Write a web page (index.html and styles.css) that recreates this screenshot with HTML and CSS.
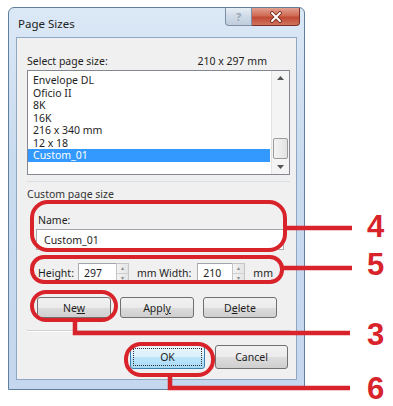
FILE: index.html
```html
<!DOCTYPE html>
<html lang="en">
<head>
    <meta charset="UTF-8">
    <title>Page Sizes</title>
    <link rel="stylesheet" href="styles.css">
</head>
<body>
    <div class="window">
        <div class="titlebar">
            <span class="title">Page Sizes</span>
            <div class="caption-buttons">
                <span class="cap-btn help">?</span>
                <span class="cap-btn close">
                    <svg width="14" height="12" viewBox="0 0 14 12">
                        <path d="M3 2 L11 10 M11 2 L3 10" stroke="#6b2418" stroke-width="3.6" stroke-linecap="round"/>
                        <path d="M3 2 L11 10 M11 2 L3 10" stroke="#fff" stroke-width="2" stroke-linecap="round"/>
                    </svg>
                </span>
            </div>
        </div>

        <div class="client">
            <div class="list-head">
                <span>Select page size:</span>
                <span>210 x 297 mm</span>
            </div>
            <div class="listbox">
                <ul class="items">
                    <li>Envelope DL</li>
                    <li>Oficio II</li>
                    <li>8K</li>
                    <li>16K</li>
                    <li>216 x 340 mm</li>
                    <li>12 x 18</li>
                    <li class="selected">Custom_01</li>
                </ul>
                <div class="scrollbar">
                    <span class="arrow"><svg width="7" height="4" viewBox="0 0 7 4"><path d="M0 4 L3.5 0 L7 4 Z" fill="#555"/></svg></span>
                    <span class="track"></span>
                    <span class="thumb"></span>
                    <span class="arrow"><svg width="7" height="4" viewBox="0 0 7 4"><path d="M0 0 L3.5 4 L7 0 Z" fill="#555"/></svg></span>
                </div>
            </div>

            <div class="group-line"></div>
            <div class="group-title">Custom page size</div>

            <div class="name-label">Name:</div>
            <div class="textbox name-box">Custom_01</div>

            <div class="size-row">
                <span class="size-label">Height:</span>
                <span class="textbox num-box height-box">297</span>
                <span class="spin"><i>&#9652;</i><i>&#9662;</i></span>
                <span class="size-label mm-width">mm Width:</span>
                <span class="textbox num-box width-box">210</span>
                <span class="spin"><i>&#9652;</i><i>&#9662;</i></span>
                <span class="size-label mm">mm</span>
            </div>

            <div class="btn-row">
                <button class="btn">Ne<u>w</u></button>
                <button class="btn">Appl<u>y</u></button>
                <button class="btn">D<u>e</u>lete</button>
            </div>

            <div class="separator"></div>

            <div class="dialog-buttons">
                <button class="btn default"><span class="focus">OK</span></button>
                <button class="btn cancel">Cancel</button>
            </div>
        </div>
    </div>

    <svg class="callouts" width="393" height="406" viewBox="0 0 393 406">
        <g fill="none" stroke="#d8232a" stroke-width="4">
            <rect x="32" y="202" width="253" height="48" rx="16"/>
            <rect x="32" y="257" width="250" height="25" rx="12"/>
            <rect x="32" y="292" width="84" height="28" rx="14"/>
            <rect x="126" y="344" width="87" height="31" rx="15"/>
        </g>
        <g fill="none" stroke="#d8232a" stroke-width="4.5">
            <path d="M285 228 H352"/>
            <path d="M282 268 H352"/>
            <path d="M75 320 V333 H350"/>
            <path d="M170 375 V388 H350"/>
        </g>
    </svg>
    <span class="num n4">4</span>
    <span class="num n5">5</span>
    <span class="num n3">3</span>
    <span class="num n6">6</span>
</body>
</html>
```

FILE: styles.css
```css
body {
    margin: 0;
    width: 393px;
    height: 406px;
    background-color: #fff;
    font-family: "Noto Sans", "Open Sans", sans-serif;
    font-size: 10.5px;
    color: #1e1e1e;
    position: relative;
    overflow: hidden;
}

.window {
    margin: 7px 0 0 8px;
    width: 297px;
    height: 383px;
    box-sizing: border-box;
    border: 1px solid #5f7f9f;
    border-radius: 6px 6px 0 0;
    background: linear-gradient(180deg, #dbe8f6 0%, #c9dbef 40%, #c4d7ee 100%);
    padding: 0 7px 9px 7px;
}

.titlebar {
    height: 29px;
    display: flex;
    justify-content: space-between;
    align-items: flex-start;
}

.title {
    padding: 8px 0 0 2px;
    font-size: 11.5px;
    color: #222;
}

.caption-buttons {
    display: flex;
    margin-right: -3px;
}

.cap-btn {
    height: 18px;
    display: flex;
    align-items: center;
    justify-content: center;
    box-sizing: border-box;
    border: 1px solid #7d8fa5;
    border-top: none;
}

.help {
    width: 27px;
    border-radius: 0 0 0 4px;
    background: linear-gradient(180deg, #e6edf5 0%, #cfdae7 50%, #bfcddd 100%);
    color: #9aa8b8;
    font-weight: bold;
    font-size: 11px;
}

.close {
    width: 48px;
    border-left: none;
    border-color: #7a3026;
    border-radius: 0 0 4px 0;
    background: linear-gradient(180deg, #e3a090 0%, #d06a55 45%, #c24a34 55%, #cf735e 100%);
}

.client {
    height: 343px;
    box-sizing: border-box;
    border: 1px solid #8fa7c2;
    background-color: #f0f0f0;
    padding: 16px 6px 0 10px;
}

.list-head {
    display: flex;
    justify-content: space-between;
    height: 14px;
    line-height: 14px;
    padding-right: 23px;
}

.listbox {
    margin-top: 2px;
    height: 105px;
    box-sizing: border-box;
    border: 1px solid #828790;
    background-color: #fff;
    display: flex;
}

.items {
    flex: 1;
    margin: 0;
    padding: 3px 1px 0 0;
    list-style: none;
}

.items li {
    line-height: 12.5px;
    height: 12.5px;
    padding-left: 5px;
}

.items li.selected {
    background-color: #3399ff;
    color: #fff;
}

.scrollbar {
    width: 17px;
    border-left: 1px solid #e3e3e3;
    background-color: #f4f4f4;
    display: flex;
    flex-direction: column;
    align-items: center;
}

.scrollbar .arrow {
    height: 14px;
    display: flex;
    align-items: center;
}

.scrollbar .track {
    flex: 1;
}

.scrollbar .thumb {
    width: 15px;
    height: 21px;
    box-sizing: border-box;
    border: 1px solid #9b9b9b;
    border-radius: 2px;
    background: linear-gradient(90deg, #f4f4f4, #e2e2e2);
    margin-bottom: 1px;
}

.group-line {
    margin-top: 6px;
    border-top: 1px solid #d5dfe5;
}

.group-title {
    margin-top: 5px;
    height: 14px;
    line-height: 14px;
    color: #333;
}

.name-label {
    margin: 12px 0 0 11px;
    height: 14px;
    line-height: 14px;
}

.textbox {
    box-sizing: border-box;
    border: 1px solid #abadb3;
    border-top-color: #a0a4ab;
    background-color: #fff;
    display: flex;
    align-items: center;
}

.name-box {
    margin: 2px 0 0 9px;
    width: 248px;
    height: 21px;
    padding-left: 7px;
}

.size-row {
    margin: 12px 0 0 11px;
    height: 21px;
    display: flex;
    align-items: center;
}

.num-box {
    height: 20px;
    padding-left: 5px;
    border-right: none;
}

.height-box {
    margin-left: 4px;
    width: 38px;
}

.width-box {
    margin-left: 6px;
    width: 35px;
}

.spin {
    width: 13px;
    height: 20px;
    box-sizing: border-box;
    border: 1px solid #c5c5c5;
    background: linear-gradient(90deg, #f3f3f3, #e4e4e4);
    display: flex;
    flex-direction: column;
}

.spin i {
    flex: 1;
    font-style: normal;
    font-size: 6px;
    line-height: 9px;
    text-align: center;
    color: #8a8a8a;
}

.spin i:first-child {
    border-bottom: 1px solid #d0d0d0;
}

.mm-width {
    margin-left: 8px;
}

.mm {
    margin-left: 8px;
}

.btn-row {
    margin: 14px 0 0 10px;
    display: flex;
    gap: 9px;
}

.btn {
    width: 74px;
    height: 21px;
    box-sizing: border-box;
    border: 1px solid #707070;
    border-radius: 3px;
    background: linear-gradient(180deg, #f2f2f2 0%, #ebebeb 50%, #dddddd 51%, #cfcfcf 100%);
    font-family: inherit;
    font-size: 10.5px;
    color: #1e1e1e;
    padding: 0;
}

.btn u {
    text-decoration-thickness: 1px;
}

.separator {
    margin-top: 12px;
    border-top: 1px solid #d0d0d0;
    border-bottom: 1px solid #fff;
}

.dialog-buttons {
    margin-top: 13px;
    display: flex;
    justify-content: flex-end;
    gap: 10px;
    padding-right: 2px;
}

.dialog-buttons .btn {
    height: 24px;
}

.btn.default {
    width: 75px;
    border-color: #3c7fb1;
    background: linear-gradient(180deg, #eaf6fd 0%, #d9f0fc 50%, #bee6fd 51%, #a7d9f5 100%);
    padding: 2px;
}

.btn.default .focus {
    display: flex;
    height: 100%;
    align-items: center;
    justify-content: center;
    border: 1px dotted #333;
    box-sizing: border-box;
}

.btn.cancel {
    width: 73px;
}

.callouts {
    position: absolute;
    left: 0;
    top: 0;
}

.num {
    position: absolute;
    left: 367px;
    font-family: "Liberation Sans", Arial, sans-serif;
    font-weight: bold;
    font-size: 31px;
    line-height: 31px;
    color: #d8232a;
}

.n4 {
    top: 211px;
}

.n5 {
    top: 249px;
}

.n3 {
    top: 319px;
}

.n6 {
    top: 373px;
}
```
